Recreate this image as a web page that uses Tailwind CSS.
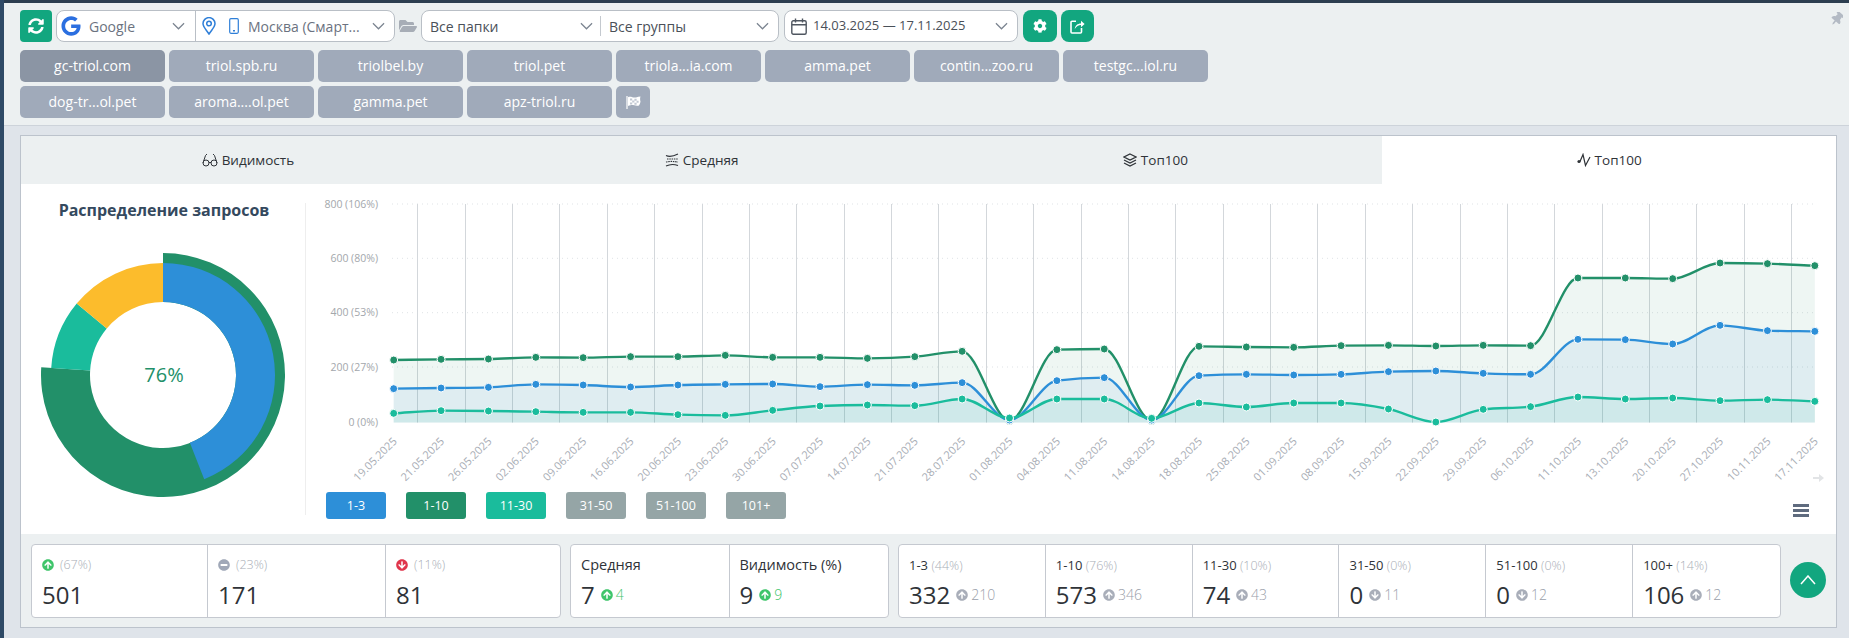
<!doctype html>
<html lang="ru">
<head>
<meta charset="utf-8">
<title>Видимость</title>
<script src="https://cdn.jsdelivr.net/npm/@tailwindcss/browser@4"></script>
</head>
<body class="font-['Open_Sans',sans-serif] overflow-hidden bg-[#dfe4ea]">
<svg class="hidden">
  <defs>
    <symbol id="up" viewBox="0 0 512 512"><path fill="currentColor" d="M8 256C8 119 119 8 256 8s248 111 248 248-111 248-248 248S8 393 8 256zm143.6 28.9l72.4-75.5V392c0 13.3 10.7 24 24 24h16c13.3 0 24-10.7 24-24V209.4l72.4 75.5c9.3 9.7 24.8 9.9 34.3.4l10.9-11c9.4-9.4 9.4-24.6 0-33.9L273 107.7c-9.4-9.4-24.6-9.4-33.9 0L106.3 240.4c-9.4 9.4-9.4 24.6 0 33.9l10.9 11c9.6 9.5 25.1 9.3 34.4-.4z"/></symbol>
    <symbol id="down" viewBox="0 0 512 512"><path fill="currentColor" transform="rotate(180 256 256)" d="M8 256C8 119 119 8 256 8s248 111 248 248-111 248-248 248S8 393 8 256zm143.6 28.9l72.4-75.5V392c0 13.3 10.7 24 24 24h16c13.3 0 24-10.7 24-24V209.4l72.4 75.5c9.3 9.7 24.8 9.9 34.3.4l10.9-11c9.4-9.4 9.4-24.6 0-33.9L273 107.7c-9.4-9.4-24.6-9.4-33.9 0L106.3 240.4c-9.4 9.4-9.4 24.6 0 33.9l10.9 11c9.6 9.5 25.1 9.3 34.4-.4z"/></symbol>
    <symbol id="minus" viewBox="0 0 512 512"><path fill="currentColor" d="M256 8C119 8 8 119 8 256s111 248 248 248 248-111 248-248S393 8 256 8zM124 296c-6.6 0-12-5.4-12-12v-56c0-6.6 5.4-12 12-12h264c6.6 0 12 5.4 12 12v56c0 6.6-5.4 12-12 12H124z"/></symbol>
    <symbol id="chev" viewBox="0 0 14 8"><path d="M1 1l6 6 6-6" fill="none" stroke="currentColor" stroke-width="1.3"/></symbol>
  </defs>
</svg>
<div class="flex h-[638px] w-[1849px]">
  <div class="w-1 shrink-0 bg-[#2f4a66]"></div>
  <main class="flex-1 min-w-0 flex flex-col">
    <div class="h-[3px] shrink-0 bg-[#2c3e50]"></div>
    <header class="relative h-[123px] shrink-0 bg-[#ecf0f1] border-b border-[#cdd3da] pl-4 pt-[7px]">
      <svg class="absolute right-[6px] top-[9px] w-[12px] h-[14px] text-[#b3bac4]" viewBox="0 0 384 512"><path fill="currentColor" transform="rotate(40 192 256)" d="M298.028 214.267L285.793 96H328c13.255 0 24-10.745 24-24V24c0-13.255-10.745-24-24-24H56C42.745 0 32 10.745 32 24v48c0 13.255 10.745 24 24 24h42.207L85.972 214.267C37.465 236.82 0 277.261 0 328c0 13.255 10.745 24 24 24h136v104.007c0 1.242.289 2.467.845 3.578l24 48c2.941 5.882 11.364 5.893 14.311 0l24-48a8.008 8.008 0 0 0 .845-3.578V352h136c13.255 0 24-10.745 24-24-.001-51.183-37.983-91.42-85.973-113.733z"/></svg>
      <div class="flex items-center h-8">
        <button class="w-8 h-8 rounded-[4px] bg-[#12a67f] flex items-center justify-center">
          <svg class="w-4 h-4 text-white" viewBox="0 0 512 512"><path fill="currentColor" d="M370.72 133.28C339.458 104.008 298.888 87.962 255.848 88c-77.458.068-144.328 53.178-162.791 126.85-1.344 5.363-6.122 9.15-11.651 9.15H24.103c-7.498 0-13.194-6.807-11.807-14.176C33.933 94.924 134.813 8 256 8c66.448 0 126.791 26.136 171.315 68.685L463.03 40.97C478.149 25.851 504 36.559 504 57.941V192c0 13.255-10.745 24-24 24H345.941c-21.382 0-32.09-25.851-16.971-40.971l41.75-41.749zM32 296h134.059c21.382 0 32.09 25.851 16.971 40.971l-41.75 41.75c31.262 29.273 71.835 45.319 114.876 45.28 77.418-.07 144.315-53.144 162.787-126.849 1.344-5.363 6.122-9.15 11.651-9.15h57.304c7.498 0 13.194 6.807 11.807 14.176C478.067 417.076 377.187 504 256 504c-66.448 0-126.791-26.136-171.315-68.685L48.97 471.03C33.851 486.149 8 475.441 8 454.059V320c0-13.255 10.745-24 24-24z"/></svg>
        </button>
        <div class="ml-[4px] w-[339px] h-8 flex bg-white border border-[#b9bfc6] rounded-lg text-[14px] text-[#6b7280]">
          <div class="w-[139px] shrink-0 border-r border-[#b9bfc6] flex items-center pl-[4px]">
            <svg class="w-[20px] h-[20px] text-[#2b6fe0]" viewBox="0 0 488 512"><path fill="currentColor" d="M488 261.8C488 403.3 391.1 504 248 504 110.8 504 0 393.2 0 256S110.8 8 248 8c66.8 0 123 24.5 166.3 64.9l-67.5 64.9C258.5 52.6 94.3 116.6 94.3 256c0 86.5 69.1 156.6 153.7 156.6 98.2 0 135-70.4 140.8-106.9H248v-85.3h236.1c2.3 12.7 3.9 24.9 3.9 41.4z"/></svg>
            <span class="ml-[8px]">Google</span>
            <svg class="ml-auto mr-[10px] w-[13px] h-[8px] text-[#7b8490]"><use href="#chev"/></svg>
          </div>
          <div class="flex-1 flex items-center pl-[6px]">
            <svg class="w-[14px] h-[18px] text-[#2f7fd8]" viewBox="0 0 14 18" fill="none" stroke="currentColor" stroke-width="1.5"><path d="M7 17C4 12.5 1 10 1 6.6a6 6 0 0 1 12 0C13 10 10 12.5 7 17z"/><circle cx="7" cy="6.5" r="2.3"/></svg>
            <svg class="ml-[13px] w-[10px] h-[16px] text-[#2f7fd8]" viewBox="0 0 10 16" fill="none" stroke="currentColor" stroke-width="1.2"><rect x=".7" y=".7" width="8.6" height="14.6" rx="1.2"/><path d="M4 12.8h2" stroke-width="1.4"/></svg>
            <span class="ml-[9px] whitespace-nowrap">Москва (Смарт...</span>
            <svg class="ml-auto mr-[9px] w-[13px] h-[8px] text-[#7b8490]"><use href="#chev"/></svg>
          </div>
        </div>
        <svg class="ml-[4px] w-[18px] h-[16px] text-[#a7adb6]" viewBox="0 0 576 512"><path fill="currentColor" d="M572.694 292.093L500.27 416.248A63.997 63.997 0 0 1 444.989 448H45.025c-18.523 0-30.064-20.093-20.731-36.093l72.424-124.155A64 64 0 0 1 152 256h399.964c18.523 0 30.064 20.093 20.73 36.093zM152 224h328v-48c0-26.51-21.49-48-48-48H272l-64-64H48C21.49 64 0 85.49 0 112v278.046l69.077-118.418C86.214 242.25 117.989 224 152 224z"/></svg>
        <div class="ml-[4px] w-[358px] h-8 flex bg-white border border-[#b9bfc6] rounded-lg text-[14px] text-[#4a5058]">
          <div class="w-[178px] shrink-0 flex items-center pl-[8px]">
            <span>Все папки</span>
            <svg class="ml-auto mr-[7px] w-[13px] h-[8px] text-[#7b8490]"><use href="#chev"/></svg>
          </div>
          <div class="flex-1 flex items-center">
            <div class="w-px h-5 bg-[#c4c9cf]"></div>
            <span class="ml-[8px]">Все группы</span>
            <svg class="ml-auto mr-[9px] w-[13px] h-[8px] text-[#7b8490]"><use href="#chev"/></svg>
          </div>
        </div>
        <div class="ml-[5px] w-[234px] h-8 flex items-center bg-white border border-[#b9bfc6] rounded-lg text-[13px] text-[#4a5058]">
          <svg class="ml-[6px] w-[16px] h-[17px] text-[#4f5660]" viewBox="0 0 16 17" fill="none" stroke="currentColor" stroke-width="1.4"><rect x=".8" y="2.8" width="14.4" height="13.4" rx="1.5"/><path d="M.8 6.8h14.4M4.5 .5v4M11.5 .5v4"/></svg>
          <span class="ml-[6px] whitespace-nowrap">14.03.2025 — 17.11.2025</span>
          <svg class="ml-auto mr-[9px] w-[13px] h-[8px] text-[#7b8490]"><use href="#chev"/></svg>
        </div>
        <button class="ml-[5px] w-[34px] h-8 rounded-lg bg-[#12a67f] flex items-center justify-center">
          <svg class="w-[14px] h-[14px] text-white" viewBox="0 0 512 512"><path fill="currentColor" d="M487.4 315.7l-42.6-24.6c4.3-23.2 4.3-47 0-70.2l42.6-24.6c4.9-2.8 7.1-8.6 5.5-14-11.1-35.6-30-67.8-54.7-94.6-3.8-4.1-10-5.1-14.8-2.3L380.8 110c-17.9-15.4-38.5-27.3-60.8-35.1V25.8c0-5.6-3.9-10.5-9.4-11.7-36.7-8.2-74.3-7.8-109.2 0-5.5 1.2-9.4 6.1-9.4 11.7V75c-22.2 7.9-42.8 19.8-60.8 35.1L88.7 85.5c-4.9-2.8-11-1.9-14.8 2.3-24.7 26.7-43.6 58.9-54.7 94.6-1.7 5.4.6 11.2 5.5 14L67.3 221c-4.3 23.2-4.3 47 0 70.2l-42.6 24.6c-4.9 2.8-7.1 8.6-5.5 14 11.1 35.6 30 67.8 54.7 94.6 3.8 4.1 10 5.1 14.8 2.3l42.6-24.6c17.9 15.4 38.5 27.3 60.8 35.1v49.2c0 5.6 3.9 10.5 9.4 11.7 36.7 8.2 74.3 7.8 109.2 0 5.5-1.2 9.4-6.1 9.4-11.7v-49.2c22.2-7.9 42.8-19.8 60.8-35.1l42.6 24.6c4.9 2.8 11 1.9 14.8-2.3 24.7-26.7 43.6-58.9 54.7-94.6 1.5-5.5-.7-11.3-5.6-14.1zM256 336c-44.1 0-80-35.9-80-80s35.9-80 80-80 80 35.9 80 80-35.9 80-80 80z"/></svg>
        </button>
        <button class="ml-[4px] w-[33px] h-8 rounded-lg bg-[#12a67f] flex items-center justify-center">
          <svg class="w-[15px] h-[15px] text-white" viewBox="0 0 15 15" fill="none" stroke="currentColor" stroke-width="1.6"><path d="M6 2.2H2a1 1 0 0 0-1 1V13a1 1 0 0 0 1 1h8.5a1 1 0 0 0 1-1V9"/><path d="M4.8 10c.3-3.5 2.7-5.6 6.2-5.6V1.8L14.6 5 11 8.2V6c-2.6 0-4.6 1.3-6.2 4z" fill="currentColor" stroke="none"/></svg>
        </button>
      </div>
      <div class="flex gap-1 mt-2 text-[14px] text-white text-center leading-8">
        <div class="w-[145px] h-8 rounded-[5px] bg-[#8b95a4]">gc-triol.com</div>
        <div class="w-[145px] h-8 rounded-[5px] bg-[#a0aaba]">triol.spb.ru</div>
        <div class="w-[145px] h-8 rounded-[5px] bg-[#a0aaba]">triolbel.by</div>
        <div class="w-[145px] h-8 rounded-[5px] bg-[#a0aaba]">triol.pet</div>
        <div class="w-[145px] h-8 rounded-[5px] bg-[#a0aaba]">triola...ia.com</div>
        <div class="w-[145px] h-8 rounded-[5px] bg-[#a0aaba]">amma.pet</div>
        <div class="w-[145px] h-8 rounded-[5px] bg-[#a0aaba]">contin...zoo.ru</div>
        <div class="w-[145px] h-8 rounded-[5px] bg-[#a0aaba]">testgc...iol.ru</div>
      </div>
      <div class="flex gap-1 mt-1 text-[14px] text-white text-center leading-8">
        <div class="w-[145px] h-8 rounded-[5px] bg-[#a0aaba]">dog-tr...ol.pet</div>
        <div class="w-[145px] h-8 rounded-[5px] bg-[#a0aaba]">aroma....ol.pet</div>
        <div class="w-[145px] h-8 rounded-[5px] bg-[#a0aaba]">gamma.pet</div>
        <div class="w-[145px] h-8 rounded-[5px] bg-[#a0aaba]">apz-triol.ru</div>
        <div class="w-[34px] h-8 rounded-[5px] bg-[#a0aaba] flex items-center justify-center">
          <svg class="w-[15px] h-[13px] text-white" viewBox="0 0 15 13"><path d="M1 0v13" stroke="currentColor" stroke-width="1.2"/><path fill="currentColor" d="M2 1.2c3-1.3 5 1 8 .2 1.600-.4 3-.8 4.500-.9-.6 2-.5 3.200 0 5-.4 2.200-1 3-1.500 4-3 1-6-1-8.500-.3-1 .2-1.700.5-2.500.9z"/><path fill="#c2c9d4" d="M4 2.500h2.200v2H4zM8.400 2.800h2.200v2H8.400zM6.200 4.500h2.200v2H6.200zM10.600 4.800h2v2h-2zM4 6.500h2.200v2H4zM8.400 6.800h2.200v2H8.400z"/></svg>
        </div>
      </div>
    </header>

    <section class="ml-4 mt-[9px] w-[1817px] h-[493px] shrink-0 border border-[#bcc3cc] bg-white flex flex-col">
      <div class="grid grid-cols-4 h-[48px] shrink-0 bg-[#ecf0f1] text-[13.5px] text-[#2f3338]">
        <div class="flex items-center justify-center gap-[4px]">
          <svg class="w-4 h-[14px]" viewBox="0 0 16 14" fill="none" stroke="currentColor" stroke-width="1"><circle cx="4" cy="10" r="3"/><circle cx="12" cy="10" r="3"/><path d="M7 9.500h2M1 10 3.500 2.500 5 1M15 10 12.500 2.500 11 1"/></svg>
          <span>Видимость</span>
        </div>
        <div class="flex items-center justify-center gap-[4px]">
          <svg class="w-[14px] h-[14px]" viewBox="0 0 14 14" fill="none" stroke="currentColor" stroke-width="1.100"><path d="M1 2.500c3 1.500 6 1.500 12-1.500M1 13c4-2 8-2 12-.5"/><path d="M2 6h11M1 9c4-1 8-.5 12 0" stroke-dasharray="1.500 .8"/></svg>
          <span>Средняя</span>
        </div>
        <div class="flex items-center justify-center gap-[4px]">
          <svg class="w-[14px] h-[14px]" viewBox="0 0 14 14" fill="none" stroke="currentColor" stroke-width="1.200"><path d="M7 1l6 3-6 3-6-3zM1 7l6 3 6-3M1 10l6 3 6-3"/></svg>
          <span>Топ100</span>
        </div>
        <div class="flex items-center justify-center gap-[4px] bg-white">
          <svg class="w-[14px] h-[14px]" viewBox="0 0 14 14" fill="none" stroke="currentColor" stroke-width="1.200"><path d="M3 8.500 6 1.500l2.500 11L13 4"/><circle cx="2" cy="8.500" r="1.600" fill="currentColor" stroke="none"/></svg>
          <span>Топ100</span>
        </div>
      </div>

      <div class="flex h-[350px] shrink-0">
        <div class="w-[285px] shrink-0 my-[19px] border-r border-[#eeeeee] flex flex-col items-center">
          <h2 class="-mt-px ml-[2px] text-[16px] leading-4 font-bold text-[#34495e] whitespace-nowrap">Распределение запросов</h2>
          <div class="relative mt-[35px] w-[244px] h-[244px]">
            <svg id="donut" class="w-[244px] h-[244px]" viewBox="-122 -122 244 244"></svg>
            <div class="absolute inset-0 flex items-center justify-center pl-[2px] text-[20px] font-medium text-[#229069]">76%</div>
          </div>
        </div>
        <div class="flex-1 min-w-0 flex flex-col">
          <svg id="chart" class="w-[1530px] h-[302px] shrink-0" viewBox="306 184 1530 302"></svg>
          <div class="flex items-start gap-5 pl-[20px] mt-[6px] text-[12.5px] text-white text-center leading-[27px]">
            <div class="w-[60px] h-[27px] rounded-[3px] bg-[#2d8fd8]">1-3</div>
            <div class="w-[60px] h-[27px] rounded-[3px] bg-[#229069]">1-10</div>
            <div class="w-[60px] h-[27px] rounded-[3px] bg-[#1abc9c]">11-30</div>
            <div class="w-[60px] h-[27px] rounded-[3px] bg-[#95a5a6]">31-50</div>
            <div class="w-[60px] h-[27px] rounded-[3px] bg-[#95a5a6]">51-100</div>
            <div class="w-[60px] h-[27px] rounded-[3px] bg-[#95a5a6]">101+</div>
            <div class="ml-auto mr-[27px] mt-[12px] w-[16px] flex flex-col gap-[2px]">
              <div class="h-[3px] bg-[#5f6b7e]"></div>
              <div class="h-[3px] bg-[#5f6b7e]"></div>
              <div class="h-[3px] bg-[#5f6b7e]"></div>
            </div>
          </div>
        </div>
      </div>

      <div class="flex-1 bg-[#ecf0f1] pl-[10px] pt-[10px] flex items-start text-[#2f3338]">
        <div class="w-[530px] h-[74px] grid grid-cols-[176px_178px_1fr] bg-white border border-[#c5c9d0] rounded-[4px] shrink-0">
          <div class="pl-[10px] border-r border-[#c5c9d0]">
            <div class="h-[16px] mt-[12px] flex items-center text-[12.5px] font-light text-[#a9aeb6]"><svg class="w-[12px] h-[12px] text-[#3fc56b] mr-[6px]"><use href="#up"/></svg>(67%)</div>
            <div class="mt-[6px] text-[24px] leading-[32px]">501</div>
          </div>
          <div class="pl-[10px] border-r border-[#c5c9d0]">
            <div class="h-[16px] mt-[12px] flex items-center text-[12.5px] font-light text-[#a9aeb6]"><svg class="w-[12px] h-[12px] text-[#a0a8b8] mr-[6px]"><use href="#minus"/></svg>(23%)</div>
            <div class="mt-[6px] text-[24px] leading-[32px]">171</div>
          </div>
          <div class="pl-[10px]">
            <div class="h-[16px] mt-[12px] flex items-center text-[12.5px] font-light text-[#a9aeb6]"><svg class="w-[12px] h-[12px] text-[#e0364c] mr-[6px]"><use href="#down"/></svg>(11%)</div>
            <div class="mt-[6px] text-[24px] leading-[32px]">81</div>
          </div>
        </div>
        <div class="ml-[9px] w-[319px] h-[74px] grid grid-cols-2 bg-white border border-[#c5c9d0] rounded-[4px] shrink-0">
          <div class="pl-[10px] border-r border-[#c5c9d0]">
            <div class="h-[16px] mt-[12px] text-[14.5px] leading-[16px]">Средняя</div>
            <div class="mt-[6px] flex items-center text-[24px] leading-[32px]">7<svg class="ml-[6px] w-[12px] h-[12px] text-[#3fc56b]"><use href="#up"/></svg><span class="ml-[3px] text-[14px] font-light text-[#3fc56b]">4</span></div>
          </div>
          <div class="pl-[10px]">
            <div class="h-[16px] mt-[12px] text-[14.5px] leading-[16px]">Видимость (%)</div>
            <div class="mt-[6px] flex items-center text-[24px] leading-[32px]">9<svg class="ml-[6px] w-[12px] h-[12px] text-[#3fc56b]"><use href="#up"/></svg><span class="ml-[3px] text-[14px] font-light text-[#3fc56b]">9</span></div>
          </div>
        </div>
        <div class="ml-[9px] w-[883px] h-[74px] grid grid-cols-6 bg-white border border-[#c5c9d0] rounded-[4px] shrink-0">
          <div class="pl-[10px] border-r border-[#c5c9d0]">
            <div class="h-[16px] mt-[12px] text-[13px] leading-[16px] whitespace-nowrap">1-3 <span class="text-[12.5px] font-light text-[#a9aeb6]">(44%)</span></div>
            <div class="mt-[6px] flex items-center text-[24px] leading-[32px]">332<svg class="ml-[6px] w-[12px] h-[12px] text-[#a9aeb9]"><use href="#up"/></svg><span class="ml-[3px] text-[14px] font-light text-[#9aa0aa]">210</span></div>
          </div>
          <div class="pl-[10px] border-r border-[#c5c9d0]">
            <div class="h-[16px] mt-[12px] text-[13px] leading-[16px] whitespace-nowrap">1-10 <span class="text-[12.5px] font-light text-[#a9aeb6]">(76%)</span></div>
            <div class="mt-[6px] flex items-center text-[24px] leading-[32px]">573<svg class="ml-[6px] w-[12px] h-[12px] text-[#a9aeb9]"><use href="#up"/></svg><span class="ml-[3px] text-[14px] font-light text-[#9aa0aa]">346</span></div>
          </div>
          <div class="pl-[10px] border-r border-[#c5c9d0]">
            <div class="h-[16px] mt-[12px] text-[13px] leading-[16px] whitespace-nowrap">11-30 <span class="text-[12.5px] font-light text-[#a9aeb6]">(10%)</span></div>
            <div class="mt-[6px] flex items-center text-[24px] leading-[32px]">74<svg class="ml-[6px] w-[12px] h-[12px] text-[#a9aeb9]"><use href="#up"/></svg><span class="ml-[3px] text-[14px] font-light text-[#9aa0aa]">43</span></div>
          </div>
          <div class="pl-[10px] border-r border-[#c5c9d0]">
            <div class="h-[16px] mt-[12px] text-[13px] leading-[16px] whitespace-nowrap">31-50 <span class="text-[12.5px] font-light text-[#a9aeb6]">(0%)</span></div>
            <div class="mt-[6px] flex items-center text-[24px] leading-[32px]">0<svg class="ml-[6px] w-[12px] h-[12px] text-[#a9aeb9]"><use href="#down"/></svg><span class="ml-[3px] text-[14px] font-light text-[#9aa0aa]">11</span></div>
          </div>
          <div class="pl-[10px] border-r border-[#c5c9d0]">
            <div class="h-[16px] mt-[12px] text-[13px] leading-[16px] whitespace-nowrap">51-100 <span class="text-[12.5px] font-light text-[#a9aeb6]">(0%)</span></div>
            <div class="mt-[6px] flex items-center text-[24px] leading-[32px]">0<svg class="ml-[6px] w-[12px] h-[12px] text-[#a9aeb9]"><use href="#down"/></svg><span class="ml-[3px] text-[14px] font-light text-[#9aa0aa]">12</span></div>
          </div>
          <div class="pl-[10px]">
            <div class="h-[16px] mt-[12px] text-[13px] leading-[16px] whitespace-nowrap">100+ <span class="text-[12.5px] font-light text-[#a9aeb6]">(14%)</span></div>
            <div class="mt-[6px] flex items-center text-[24px] leading-[32px]">106<svg class="ml-[6px] w-[12px] h-[12px] text-[#a9aeb9]"><use href="#up"/></svg><span class="ml-[3px] text-[14px] font-light text-[#9aa0aa]">12</span></div>
          </div>
        </div>
        <button class="ml-[9px] mt-[18px] w-9 h-9 rounded-full bg-[#12a67f] flex items-center justify-center shrink-0">
          <svg class="w-[16px] h-[10px] text-white" viewBox="0 0 16 10" fill="none" stroke="currentColor" stroke-width="1.500"><path d="M1 9l7-8 7 8"/></svg>
        </button>
      </div>
    </section>
  </main>
</div>
<script>
(function () {
  function pt(r, f) { var a = f * 2 * Math.PI; return [r * Math.sin(a), -r * Math.cos(a)]; }
  function arc(r0, r1, f0, f1, c) {
    var a = pt(r1, f0), b = pt(r1, f1), d = pt(r0, f1), e = pt(r0, f0), l = f1 - f0 > .5 ? 1 : 0;
    return '<path fill="' + c + '" d="M' + a + 'A' + r1 + ' ' + r1 + ' 0 ' + l + ' 1 ' + b + 'L' + d + 'A' + r0 + ' ' + r0 + ' 0 ' + l + ' 0 ' + e + 'Z"/>';
  }
  document.getElementById('donut').innerHTML =
    arc(73, 122, 0, .76, '#229069') + arc(73, 112, 0, .44, '#2d8fd8') +
    arc(73, 112, .76, .86, '#1abc9c') + arc(73, 112, .86, 1, '#fcbc2c');

  var dates = '19.05.2025 21.05.2025 26.05.2025 02.06.2025 09.06.2025 16.06.2025 20.06.2025 23.06.2025 30.06.2025 07.07.2025 14.07.2025 21.07.2025 28.07.2025 01.08.2025 04.08.2025 11.08.2025 14.08.2025 18.08.2025 25.08.2025 01.09.2025 08.09.2025 15.09.2025 22.09.2025 29.09.2025 06.10.2025 11.10.2025 13.10.2025 20.10.2025 27.10.2025 10.11.2025 17.11.2025'.split(' ');
  var G = [510,508,507,502,503,500,500,496,502,502,505,500,484,692,479,477,692,469,471,472,467,466,468,466,467,264,264,266,219,221,227];
  var B = [596,594,592,583,585,591,585,583,582,590,584,586,578,690,572,563,690,557,553,555,553,545,543,550,553,448,449,462,406,422,424];
  var T = [670,662,663,665,667,667,674,676,661,648,645,647,627,684,627,627,685,639,651,639,639,657,696,658,650,621,627,624,632,629,634];
  var x0 = 393.7, st = 47.37, base = 422.6;
  function X(i) { return x0 + i * st; }
  function Y(v) { return 190 + v / 3; }
  function curve(vals) {
    var y = vals.map(Y), n = y.length, s = [], t = [], i;
    for (i = 0; i < n - 1; i++) s[i] = (y[i + 1] - y[i]) / st;
    for (i = 1; i < n - 1; i++) {
      if (s[i - 1] * s[i] <= 0) t[i] = 0;
      else t[i] = (Math.sign(s[i - 1]) + Math.sign(s[i])) * Math.min(Math.abs(s[i - 1]), Math.abs(s[i]), .25 * Math.abs(s[i - 1] + s[i]));
    }
    t[0] = s[0]; t[n - 1] = s[n - 2];
    var d = 'M' + X(0) + ' ' + y[0];
    for (i = 0; i < n - 1; i++) {
      var h = st / 3;
      d += 'C' + (X(i) + h) + ' ' + (y[i] + t[i] * h) + ' ' + (X(i + 1) - h) + ' ' + (y[i + 1] - t[i + 1] * h) + ' ' + X(i + 1) + ' ' + y[i + 1];
    }
    return d;
  }
  var o = '', i;
  [204, 258.3, 312.7, 367].forEach(function (y) {
    o += '<path d="M392 ' + y + 'H1815" stroke="#dfe3e6" stroke-width="1" stroke-dasharray="1 4"/>';
  });
  for (i = 0; i < 30; i++) {
    var vx = Math.round(X(i) + st / 2) + .5;
    o += '<path d="M' + vx + ' 204V422.600" stroke="#d3d7db" stroke-width="1"/>';
  }
  var labels = ['800 (106%)', '600 (80%)', '400 (53%)', '200 (27%)', '0 (0%)'];
  [207.500, 261.500, 316, 370.500, 425.500].forEach(function (y, k) {
    o += '<text x="378" y="' + y + '" text-anchor="end" font-size="10.500" fill="#a3a7ac">' + labels[k] + '</text>';
  });
  var series = [[G, '#229069'], [B, '#2d8fd8'], [T, '#1abc9c']];
  series.forEach(function (s) {
    var d = curve(s[0]);
    o += '<path d="' + d + 'L' + X(30) + ' ' + base + 'L' + X(0) + ' ' + base + 'Z" fill="' + s[1] + '" fill-opacity=".08"/>';
  });
  series.forEach(function (s) {
    o += '<path d="' + curve(s[0]) + '" fill="none" stroke="' + s[1] + '" stroke-width="2.400"/>';
  });
  series.forEach(function (s) {
    s[0].forEach(function (v, i) {
      o += '<circle cx="' + X(i) + '" cy="' + Y(v) + '" r="4" fill="' + s[1] + '" stroke="#fff" stroke-width="1"/>';
    });
  });
  dates.forEach(function (t, i) {
    var ax = X(i) + 4, ay = 442;
    o += '<text x="' + ax + '" y="' + ay + '" text-anchor="end" font-size="11" fill="#a8adb5" transform="rotate(-45 ' + ax + ' ' + ay + ')">' + t + '</text>';
  });
  o += '<path d="M1813 477h6v-3l5 4-5 4v-3h-6z" fill="#e2e4e6"/>';
  document.getElementById('chart').innerHTML = o;
})();
</script>
</body>
</html>
